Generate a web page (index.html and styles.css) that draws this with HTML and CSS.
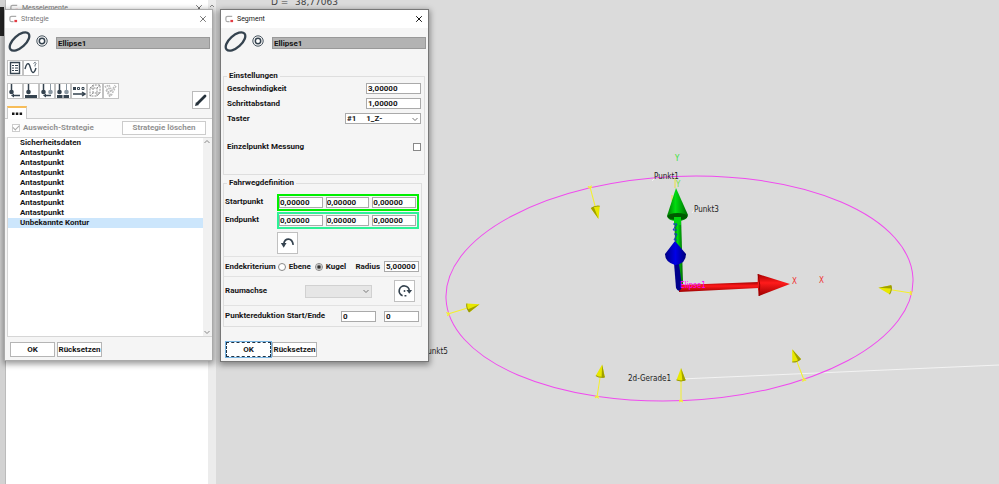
FILE: index.html
```html
<!DOCTYPE html>
<html lang="de">
<head>
<meta charset="utf-8">
<title>Segment</title>
<link rel="stylesheet" href="styles.css">
</head>
<body>
<svg class="defs" aria-hidden="true">
  <symbol id="app" viewBox="0 0 10 8"><path d="M8 1H3Q1 1 1 3V5Q1 7 3 7H5" fill="none" stroke="#aaa" stroke-width="1.3"/><path d="M6 5H9V7.500H6Z" fill="#e33b43"/></symbol>
  <symbol id="close" viewBox="0 0 8 8"><path d="M1.200 1.200 6.800 6.800M6.800 1.200 1.200 6.800" fill="none" stroke="currentColor"/></symbol>
  <symbol id="ellipse" viewBox="0 0 24 24"><ellipse cx="12.500" cy="12.500" rx="12" ry="6" transform="rotate(-42 12.500 12.500)" fill="none" stroke="#35434f" stroke-width="2.300"/></symbol>
  <symbol id="probe" viewBox="0 0 12 12"><circle cx="6" cy="6" r="5.200" fill="none" stroke="#46535e"/><circle cx="6" cy="6" r="2.700" fill="#fff" stroke="#35434f" stroke-width="1.500"/></symbol>
  <symbol id="chevron" viewBox="0 0 8 8"><path d="M1.500 3 4 5.500 6.500 3" fill="none" stroke="currentColor"/></symbol>
</svg>
<main class="desktop">
  <aside class="dock">
    <div class="dock-mark"></div>
    <section class="back-window">
      <header class="titlebar inactive"><svg class="app-icon"><use href="#app"/></svg><span>Messelemente</span><button class="close" aria-label="Messelemente schließen"><svg><use href="#close"/></svg></button></header>
    </section>
    <div class="dock-scroll"><svg><path d="M2 7 4 5 6 7" fill="none" stroke="#888"/></svg></div>
  </aside>

  <section class="scene" aria-label="3D-Ansicht">
    <svg viewBox="216 0 783 484" preserveAspectRatio="xMinYMin meet">
      <defs>
        <linearGradient id="green"><stop offset="0" stop-color="#007a00"/><stop offset=".4" stop-color="#00dc10"/><stop offset="1" stop-color="#006800"/></linearGradient>
        <linearGradient id="red" x2="0" y2="1"><stop offset="0" stop-color="#a50000"/><stop offset=".4" stop-color="#ff1b1b"/><stop offset="1" stop-color="#9c0000"/></linearGradient>
        <linearGradient id="blue"><stop offset="0" stop-color="#000080"/><stop offset=".5" stop-color="#0000e8"/><stop offset="1" stop-color="#000078"/></linearGradient>
        <g id="touch"><path d="M0 0V-22M-2-1 2 1M2-1-2 1" stroke="#f4f02c" fill="none"/><path d="M0-33 4.500-21Q0-19-4.500-21Z" fill="#e8e800"/><path d="M0-33 4.500-21Q3-20 1.500-20Z" fill="#a0a000"/><path d="M-4.500-21Q0-19 4.500-21" stroke="#9a9a00" fill="none"/></g>
      </defs>
      <text x="271" y="5" class="readout">D =</text><text x="295" y="5" class="readout">38,77063</text>
      <path d="M681 379 999 365" stroke="#f3f3f3" fill="none"/>
      <ellipse cx="679.500" cy="288.500" rx="233.700" ry="112.200" transform="rotate(-2.500 679.500 288.500)" fill="none" stroke="#f04bef"/>
      <use href="#touch" transform="translate(590 187) rotate(165)"/>
      <use href="#touch" transform="translate(448 314) rotate(73)"/>
      <use href="#touch" transform="translate(911 293) rotate(-81)"/>
      <use href="#touch" transform="translate(597 397) rotate(9)"/>
      <use href="#touch" transform="translate(681 401)"/>
      <use href="#touch" transform="translate(804 380) rotate(-21)"/>
      <path d="M675 178V188M672 195V201" stroke="#e7e43c"/>
      <path d="M652 181 655 178M692 213 695 209" stroke="#f4f4f4"/>
      <path d="M674 215H681L683 284 677 288Z" fill="url(#green)"/>
      <path d="M676 188 688 215Q687 221 677 221Q668 221 667 216Z" fill="url(#green)"/>
      <ellipse cx="677.500" cy="216.500" rx="10" ry="3.500" fill="#005b00"/>
      <path d="M674 217H681V225H674Z" fill="#00d40e"/>
      <path d="M679 285 759 282V288L679 292Z" fill="url(#red)"/>
      <path d="M758 274 790 284 759 296Q757 285 758 274Z" fill="url(#red)"/>
      <path d="M758 274Q761 285 759 296" fill="none" stroke="#900"/>
      <path d="M674 263H679L682 287Q679 294 676 288Z" fill="#00008b"/>
      <path d="M675 241 686 254Q686 264 675 265Q665 262 665 254Z" fill="url(#blue)"/>
      <path d="M673 224H677L673 230H677M674 234H677L674 240H677" fill="none" stroke="#1b28d7"/>
      <g class="scene-label">
        <text x="654" y="179">Punkt1</text><text x="694" y="212">Punkt3</text>
        <text x="628" y="381">2d-Gerade1</text><text x="423" y="354">Punkt5</text>
        <text x="680" y="288" fill="#ff00ff">Elipse1</text>
        <text x="675" y="161" fill="#35e235">Y</text><text x="676" y="187" fill="#70e240">Y</text>
        <text x="792" y="284" fill="#ef3030">X</text><text x="819" y="283" fill="#ef3030">X</text>
      </g>
    </svg>
  </section>

  <section class="dialog strategy" aria-label="Strategie">
    <header class="titlebar inactive"><svg class="app-icon"><use href="#app"/></svg><span>Strategie</span><button class="close" aria-label="Strategie schließen"><svg><use href="#close"/></svg></button></header>
    <div class="identity"><svg class="ellipse-icon"><use href="#ellipse"/></svg><svg class="probe-icon"><use href="#probe"/></svg><input class="name" aria-label="Elementname" value="Ellipse1"></div>
    <div class="tools first">
      <button aria-label="Liste"><svg viewBox="0 0 14 14"><path d="M2.500 1.500H11.500V12.500H2.500Z" fill="none" stroke="#35434f" stroke-width="1.400"/><path d="M4 4.500H6M7 4.500H10M4 7H6M7 7H10M4 9.500H6M7 9.500H10" stroke="#35434f"/></svg></button>
      <button aria-label="Kurve"><svg viewBox="0 0 14 14"><path d="M1 8Q3 0 5.500 4L7.500 10Q10 14 12 7" fill="none" stroke="#35434f" stroke-width="1.400"/><path d="M9.500 2.500Q11.500 0 12 2.500L11 4V5.500" fill="none" stroke="#66727c"/></svg></button>
    </div>
    <div class="tool-line">
      <div class="tools">
        <button aria-label="Antastpunkt"><svg viewBox="0 0 14 14"><path d="M3.500 0V9M5 11.500H12" stroke="#35434f" stroke-width="1.500"/><circle cx="3.500" cy="8" r="2.300" fill="#35434f"/><path d="M3 11.500 6 9.500V13.500Z" fill="#35434f"/></svg></button>
        <button aria-label="Fläche"><svg viewBox="0 0 14 14"><path d="M4.500 0V8" stroke="#35434f" stroke-width="1.500"/><circle cx="4.500" cy="8" r="2.300" fill="#35434f"/><path d="M1 11H13V14H1Z" fill="#35434f"/></svg></button>
        <button aria-label="Zwei Punkte"><svg viewBox="0 0 14 14"><path d="M3.500 0V9M5 11.500H11" stroke="#35434f" stroke-width="1.500"/><circle cx="3.500" cy="8" r="2.300" fill="#35434f"/><path d="M10.500 0V8" stroke="#8b98a2"/><circle cx="10.500" cy="8" r="2.300" fill="#8b98a2"/><path d="M3 11.500 6 9.500V13.500Z" fill="#35434f"/></svg></button>
        <button aria-label="Zwei Flächen"><svg viewBox="0 0 14 14"><path d="M3.500 0V8" stroke="#35434f" stroke-width="1.500"/><circle cx="3.500" cy="8" r="2.300" fill="#35434f"/><path d="M10.500 0V8" stroke="#8b98a2"/><circle cx="10.500" cy="8" r="2.300" fill="#8b98a2"/><path d="M1 11H6.500V14H1ZM7.500 11H13V14H7.500Z" fill="#35434f"/></svg></button>
        <button aria-label="Punktfolge"><svg viewBox="0 0 14 14"><path d="M1 3H4V6H1Z" fill="#35434f"/><path d="M5.500 3.500H7.500V5.500H5.500ZM10 3.500H12V5.500H10Z" fill="none" stroke="#35434f"/><path d="M1 10H12M10 8 13 10 10 12" fill="none" stroke="#35434f" stroke-width="1.500"/></svg></button>
        <button disabled aria-label="Raumkontur"><svg viewBox="0 0 14 14"><path d="M2 4 5 1H12V9L9 12H2V4H9V12M9 4 12 1M2 12 5 9H12M5 9V1" fill="none" stroke="#8d8d8d" stroke-dasharray="2 1"/></svg></button>
        <button disabled aria-label="Prüfen"><svg viewBox="0 0 14 14"><path d="M1 2 7 12 12 2M3 1 7 8 11 1M5 1 7 5M2 6 6 13" fill="none" stroke="#bdbdbd" stroke-width="1.500" stroke-dasharray="2 1"/></svg></button>
      </div>
      <button class="edit" aria-label="Bearbeiten"><svg viewBox="0 0 16 16"><path d="M5 11 12 4" stroke="#26323b" stroke-width="2.800" stroke-linecap="round"/><path d="M2 14 3 10 6 13Z" fill="#26323b"/></svg></button>
    </div>
    <div class="tabs"><button aria-label="Strategie-Liste"><svg viewBox="0 0 12 4"><path d="M1 .500H3.500V3H1ZM4.800 .500H7.300V3H4.800ZM8.600 .500H11.100V3H8.600Z" fill="#151515"/></svg></button></div>
    <div class="list-head"><label><input type="checkbox" checked disabled><span>Ausweich-Strategie</span></label><button disabled>Strategie löschen</button></div>
    <div class="list-box">
      <ul><li>Sicherheitsdaten</li><li>Antastpunkt</li><li>Antastpunkt</li><li>Antastpunkt</li><li>Antastpunkt</li><li>Antastpunkt</li><li>Antastpunkt</li><li>Antastpunkt</li><li class="selected">Unbekannte Kontur</li></ul>
      <div class="scroll"><svg class="up"><use href="#chevron"/></svg><svg><use href="#chevron"/></svg></div>
    </div>
    <footer><button>OK</button><button>Rücksetzen</button></footer>
  </section>

  <section class="dialog segment" aria-label="Segment">
    <header class="titlebar"><svg class="app-icon"><use href="#app"/></svg><span>Segment</span><button class="close" aria-label="Segment schließen"><svg><use href="#close"/></svg></button></header>
    <div class="identity"><svg class="ellipse-icon"><use href="#ellipse"/></svg><svg class="probe-icon"><use href="#probe"/></svg><input class="name" aria-label="Elementname" value="Ellipse1"></div>
    <fieldset class="settings"><legend>Einstellungen</legend>
      <div class="row"><label for="speed">Geschwindigkeit</label><input id="speed" value="3,00000"></div>
      <div class="row"><label for="step">Schrittabstand</label><input id="step" value="1,00000"></div>
      <div class="row"><label for="probe-select">Taster</label><span class="select"><select id="probe-select"><option>#1 &nbsp; &nbsp; 1_Z-</option></select><svg><use href="#chevron"/></svg></span></div>
      <div class="row single"><label for="single">Einzelpunkt Messung</label><input id="single" type="checkbox"></div>
    </fieldset>
    <fieldset class="path"><legend>Fahrwegdefinition</legend>
      <div class="row point"><span>Startpunkt</span><div class="coords start"><input aria-label="Startpunkt X" value="0,00000"><input aria-label="Startpunkt Y" value="0,00000"><input aria-label="Startpunkt Z" value="0,00000"></div></div>
      <div class="row point"><span>Endpunkt</span><div class="coords end"><input aria-label="Endpunkt X" value="0,00000"><input aria-label="Endpunkt Y" value="0,00000"><input aria-label="Endpunkt Z" value="0,00000"></div></div>
      <div class="reverse"><button class="square" aria-label="Richtung umkehren"><svg viewBox="0 0 20 20"><path d="M6 11Q7 6 11 6Q15 6 16 12" fill="none" stroke="#35434f" stroke-width="1.800"/><path d="M3 10H9L6 15Z" fill="#35434f"/></svg></button></div>
      <div class="row criterion"><span>Endekriterium</span><label><input type="radio" name="criterion"><span>Ebene</span></label><label><input type="radio" name="criterion" checked><span>Kugel</span></label><label class="radius" for="radius">Radius</label><input id="radius" value="5,00000"></div>
      <div class="row axis"><label for="axis">Raumachse</label><span class="select"><select id="axis" disabled><option></option></select><svg><use href="#chevron"/></svg></span><button class="square" aria-label="Drehen"><svg viewBox="0 0 20 20"><path d="M8 15A5.300 5.300 0 1 1 15 10M12 15H10" fill="none" stroke="#35434f" stroke-width="1.800"/><path d="M12 9H18L15 13Z" fill="#35434f"/><circle cx="10" cy="10" r="1" fill="#35434f"/></svg></button></div>
      <div class="row reduction"><span>Punktereduktion Start/Ende</span><input aria-label="Punktereduktion Start" value="0"><input aria-label="Punktereduktion Ende" value="0"></div>
    </fieldset>
    <footer><button class="default">OK</button><button>Rücksetzen</button></footer>
  </section>
</main>
</body>
</html>
```
FILE: styles.css
```css
* { box-sizing: border-box; }
body { margin: 0; font: bold 8px/10px Roboto, "Liberation Sans", sans-serif; color: #151515; }
button, input, select { font: inherit; color: inherit; margin: 0; padding: 0; border-radius: 0; }
svg { display: block; }
.defs { position: absolute; width: 0; height: 0; }

.desktop { position: relative; display: flex; min-height: 100vh; overflow: hidden; background: #dbdbdb; }
.dock { display: flex; flex: 0 0 216px; background: #d2d2d2; }
.dock-mark { width: 4px; height: 29px; margin-top: 7px; background: #252525; }
.back-window { flex: 1; margin-left: 1px; background: #fff; border-left: 1px solid #bbb; }
.dock-scroll { width: 8px; background: #ececec; }
.dock-scroll svg { width: 8px; height: 8px; }
.scene { flex: 1; min-width: 0; }
.scene > svg { width: 100%; height: 100vh; }
.readout { font: 9px "DejaVu Sans", sans-serif; fill: #444; }
.scene-label { font: 8px "DejaVu Sans Condensed", "DejaVu Sans", sans-serif; fill: #222; }

.dialog { position: absolute; top: 10px; display: flex; flex-direction: column; width: 207px; background: #f5f5f5; outline: 1px solid #aaa; box-shadow: 0 2px 6px 2px #0006; }
.strategy { left: 5px; }
.segment { left: 221px; outline-color: #777; }
.titlebar { display: flex; align-items: center; gap: 3px; height: 18px; padding: 0 5px 0 4px; background: #fff; font-size: 7px; font-weight: normal; }
.inactive { color: #777; }
.back-window .titlebar { height: 16px; }
.app-icon { width: 9px; height: 8px; }
.close { width: 8px; height: 8px; margin-left: auto; border: 0; background: none; }
.close svg { width: 8px; height: 8px; }
.identity { display: flex; align-items: center; height: 28px; padding: 0 2px 2px; }
.ellipse-icon { width: 24px; height: 24px; overflow: visible; }
.probe-icon { width: 12px; height: 12px; margin: 0 8px 0 5px; }
.name { flex: 1; min-width: 0; height: 12px; margin-top: 4px; padding: 0 1px; border: 1px solid #999; background: #b3b3b3; }

.tools { display: flex; }
.first { margin: 4px 0 0 2px; }
.tools button { width: 16px; height: 16px; border: 1px solid #c2c2c2; background: #fff; }
.tools svg { width: 14px; height: 14px; }
.tool-line { display: flex; justify-content: space-between; align-items: flex-start; height: 30px; padding: 7px 2px 0; }
.edit { width: 18px; height: 18px; margin-top: 8px; border: 1px solid #bbb; background: #fff; }
.edit svg { width: 16px; height: 16px; }
.tabs { height: 13px; padding-left: 2px; border-bottom: 1px solid #ccc; }
.tabs button { display: grid; place-items: center; width: 20px; height: 13px; border: solid #ccc; border-width: 0 1px; border-top: 2px solid #f7bd59; background: #fff; }
.tabs svg { width: 12px; height: 4px; }
.list-head { display: flex; align-items: center; justify-content: space-between; height: 18px; padding: 0 6px 0 7px; background: #fcfcfc; color: #929292; }
.list-head label { display: flex; align-items: center; gap: 3px; }
input[type="checkbox"], input[type="radio"] { appearance: none; flex: none; width: 8px; height: 8px; border: 1px solid #888; background: #fff; }
.list-head input:checked { border-color: #ccc; }
.list-head input:checked::after { content: ""; display: block; width: 5px; height: 3px; border: solid #aaa; border-width: 0 0 1px 1px; transform: rotate(-45deg); }
.list-head button { width: 84px; height: 14px; border: 1px solid #ccc; background: #fff; }
.list-box { display: flex; height: 200px; margin-left: 2px; border: 1px solid #d6d6d6; border-right: 0; background: #fff; }
ul { flex: 1; margin: 0; padding: 0; list-style: none; }
li { height: 10px; padding-left: 12px; }
.selected { background: #cce6fc; }
.scroll { display: flex; flex-direction: column; justify-content: space-between; width: 9px; background: #f1f1f1; color: #888; }
.scroll svg, .select svg { width: 8px; height: 8px; }
.up { transform: scaleY(-1); }
footer { display: flex; gap: 2px; padding: 5px; height: 23px; }
footer button { width: 45px; height: 15px; border: 1px solid #b5b5b5; background: #fff; white-space: nowrap; }
footer .default { border: 1px dashed #234; outline: 1px solid #77b4e2; }

fieldset { min-width: 0; margin: 0; padding: 0; border: 1px solid #dedede; }
legend { margin-left: 3px; padding: 0 2px; line-height: 10px; }
.settings { height: 104px; margin: 15px 3px 0 2px; }
.settings .row { display: flex; align-items: center; justify-content: space-between; height: 15px; padding: 0 3px; }
.row input:not([type]) { width: 55px; height: 11px; min-width: 0; padding: 0 1px; border: 1px solid #aaa; background: #fff; }
.select { position: relative; width: 76px; height: 11px; }
.select select { display: block; width: 100%; height: 100%; padding: 0 1px; appearance: none; border: 1px solid #aaa; background: #fff; line-height: 8px; }
.select svg { position: absolute; right: 2px; top: 2px; color: #777; }
.settings .single { margin-top: 13px; }
.path { height: 149px; margin: 3px 6px 0 2px; }
.path .row { display: flex; align-items: center; padding: 0 2px 0 1px; }
.path .point { height: 18px; justify-content: space-between; }
.path .point:first-of-type { margin-top: 5px; }
.coords { display: flex; gap: 3px; width: 142px; height: 17px; padding: 1px 1px 1px 0; border: 2px solid #00f000; }
.coords.end { border-color: #2df296; }
.coords input:not([type]) { flex: 1; padding: 0; }
.reverse { display: flex; height: 28px; padding: 3px 0 0 53px; border-bottom: 1px solid #e2e2e2; }
.square { width: 21px; height: 22px; border: 1px solid #c0c0c0; background: #fff; }
.square svg { width: 19px; height: 20px; }
.path .criterion { height: 20px; border-bottom: 1px solid #e2e2e2; }
.criterion label { display: flex; align-items: center; gap: 3px; margin-left: 2px; }
.criterion label + label { margin-left: 4px; }
.criterion .radius { margin-left: auto; margin-right: 4px; }
.criterion input[type="radio"] { border-radius: 50%; }
.criterion input[type="radio"]:checked { background: radial-gradient(#333 0 1px, #fff 3px); }
.criterion input:not([type]) { width: 35px; }
.path .axis { height: 29px; border-bottom: 1px solid #e2e2e2; }
.axis .select { width: 67px; height: 13px; margin-left: auto; }
.axis select { background: #e1e1e1; border-color: #c2c2c2; }
.axis .square { margin: 0 4px 0 22px; }
.path .reduction { height: 20px; gap: 8px; }
.reduction span { margin-right: auto; }
.reduction input:not([type]) { width: 35px; }
.segment footer { height: 34px; margin-top: auto; padding-top: 15px; gap: 1px; }
```
